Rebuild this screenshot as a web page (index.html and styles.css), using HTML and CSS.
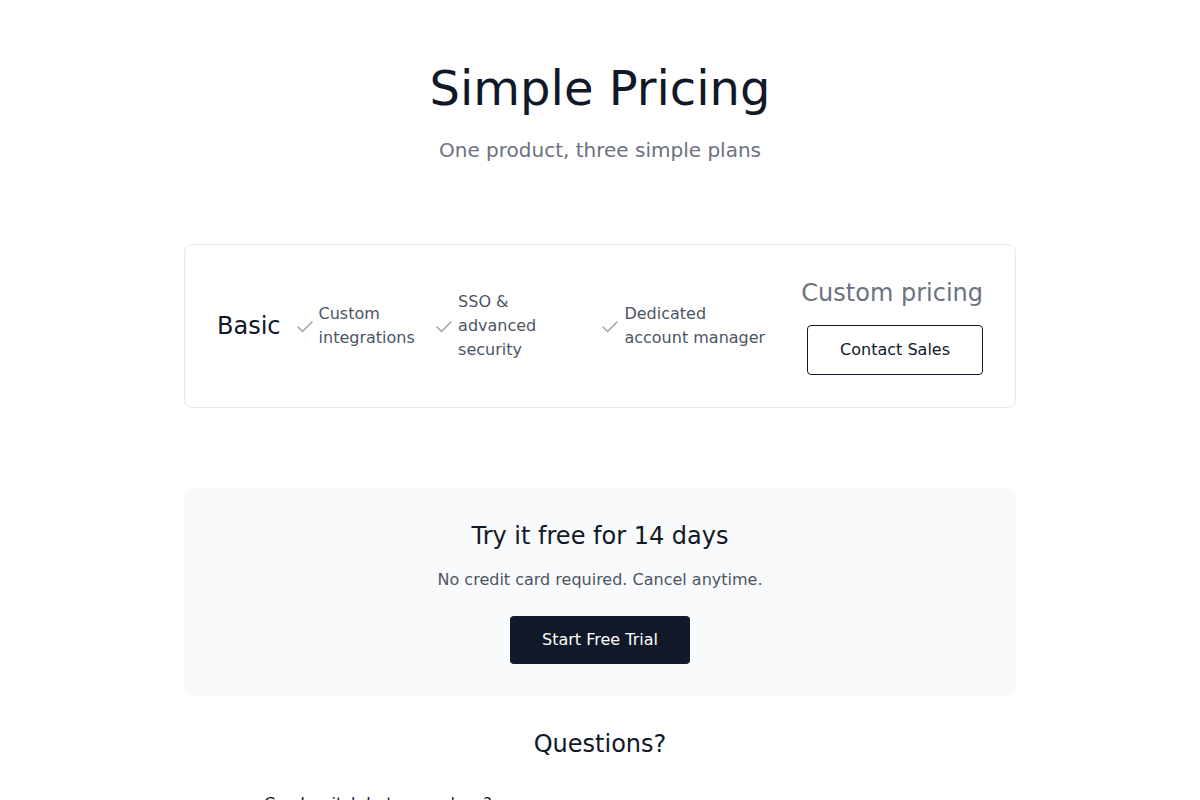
FILE: index.html
```html
<!DOCTYPE html>
<html>
  <head>
    <title>Simple Pricing</title>
    <link rel="stylesheet" href="styles.css">
  </head>
  <body>
    <main class="page">
      <header class="hero">
        <h1>Simple Pricing</h1>
        <p>One product, three simple plans</p>
      </header>

      <section class="plan-card">
        <div class="plan-info">
          <h2 class="plan-name">Basic</h2>
          <ul class="feature-list">
            <li>
              <svg class="check" viewBox="0 0 16 16" fill="none" stroke="currentColor" stroke-width="1.5" stroke-linecap="round" stroke-linejoin="round"><path d="M1 9l4.5 4.5L15 4"/></svg>
              <span>Custom integrations</span>
            </li>
            <li>
              <svg class="check" viewBox="0 0 16 16" fill="none" stroke="currentColor" stroke-width="1.5" stroke-linecap="round" stroke-linejoin="round"><path d="M1 9l4.5 4.5L15 4"/></svg>
              <span>SSO &amp; advanced security</span>
            </li>
            <li>
              <svg class="check" viewBox="0 0 16 16" fill="none" stroke="currentColor" stroke-width="1.5" stroke-linecap="round" stroke-linejoin="round"><path d="M1 9l4.5 4.5L15 4"/></svg>
              <span>Dedicated account manager</span>
            </li>
          </ul>
        </div>
        <div class="plan-price">
          <p class="price">Custom pricing</p>
          <button class="btn-outline">Contact Sales</button>
        </div>
      </section>

      <section class="trial">
        <h2>Try it free for 14 days</h2>
        <p>No credit card required. Cancel anytime.</p>
        <button class="btn-dark">Start Free Trial</button>
      </section>

      <section class="faq">
        <h2>Questions?</h2>
        <dl class="faq-list">
          <div class="faq-item">
            <dt>Can I switch between plans?</dt>
            <dd>Yes, you can upgrade or downgrade at any time. Changes take effect on your next billing cycle.</dd>
          </div>
          <div class="faq-item">
            <dt>What payment methods do you accept?</dt>
            <dd>We accept all major credit cards and can invoice annual plans.</dd>
          </div>
        </dl>
      </section>
    </main>
  </body>
</html>
```

FILE: styles.css
```css
body {
  margin: 0;
  font-family: 'DejaVu Sans', sans-serif;
  color: #111827;
  background-color: #fff;
}
h1, h2, p, ul, dl, dd {
  margin: 0;
  padding: 0;
}
button {
  font-family: inherit;
  font-size: 16px;
  line-height: 24px;
  cursor: pointer;
}

.page {
  max-width: 896px;
  margin: 0 auto;
  padding: 64px 32px;
  box-sizing: border-box;
}

/* Header */
.hero {
  text-align: center;
}
.hero h1 {
  font-size: 48px;
  line-height: 48px;
  font-weight: normal;
  color: #111827;
}
.hero p {
  margin-top: 24px;
  font-size: 20px;
  line-height: 28px;
  color: #6b7280;
}

/* Plan card */
.plan-card {
  margin-top: 80px;
  display: flex;
  align-items: center;
  justify-content: space-between;
  gap: 32px;
  padding: 32px;
  border: 1px solid #e5e7eb;
  border-radius: 8px;
}
.plan-info {
  display: flex;
  align-items: center;
  gap: 16px;
}
.plan-name {
  font-size: 24px;
  line-height: 32px;
  font-weight: normal;
}
.feature-list {
  list-style: none;
  display: flex;
  gap: 16px;
}
.feature-list li {
  display: flex;
  align-items: center;
  gap: 6px;
  font-size: 16px;
  line-height: 24px;
  color: #4b5563;
}
.check {
  width: 16px;
  height: 16px;
  flex-shrink: 0;
  color: #9ca3af;
}
.plan-price {
  flex-shrink: 0;
  display: flex;
  flex-direction: column;
  align-items: flex-end;
  gap: 16px;
}
.price {
  font-size: 24px;
  line-height: 32px;
  color: #6b7280;
}
.btn-outline {
  padding: 12px 32px;
  background: #fff;
  color: #111827;
  border: 1px solid #111827;
  border-radius: 4px;
}

/* Trial */
.trial {
  margin-top: 80px;
  padding: 32px;
  background-color: #f9fafb;
  border-radius: 8px;
  text-align: center;
}
.trial h2 {
  font-size: 24px;
  line-height: 32px;
  font-weight: normal;
}
.trial p {
  margin-top: 16px;
  font-size: 16px;
  line-height: 24px;
  color: #4b5563;
}
.btn-dark {
  margin-top: 24px;
  padding: 12px 32px;
  background-color: #111827;
  color: #fff;
  border: none;
  border-radius: 4px;
}

/* FAQ */
.faq {
  margin-top: 32px;
}
.faq h2 {
  text-align: center;
  font-size: 24px;
  line-height: 32px;
  font-weight: normal;
}
.faq-list {
  max-width: 672px;
  margin: 32px auto 0;
}
.faq-item + .faq-item {
  margin-top: 24px;
}
.faq-item dt {
  font-size: 16px;
  line-height: 24px;
  font-weight: 500;
}
.faq-item dd {
  margin-top: 8px;
  font-size: 16px;
  line-height: 24px;
  color: #4b5563;
}
```
